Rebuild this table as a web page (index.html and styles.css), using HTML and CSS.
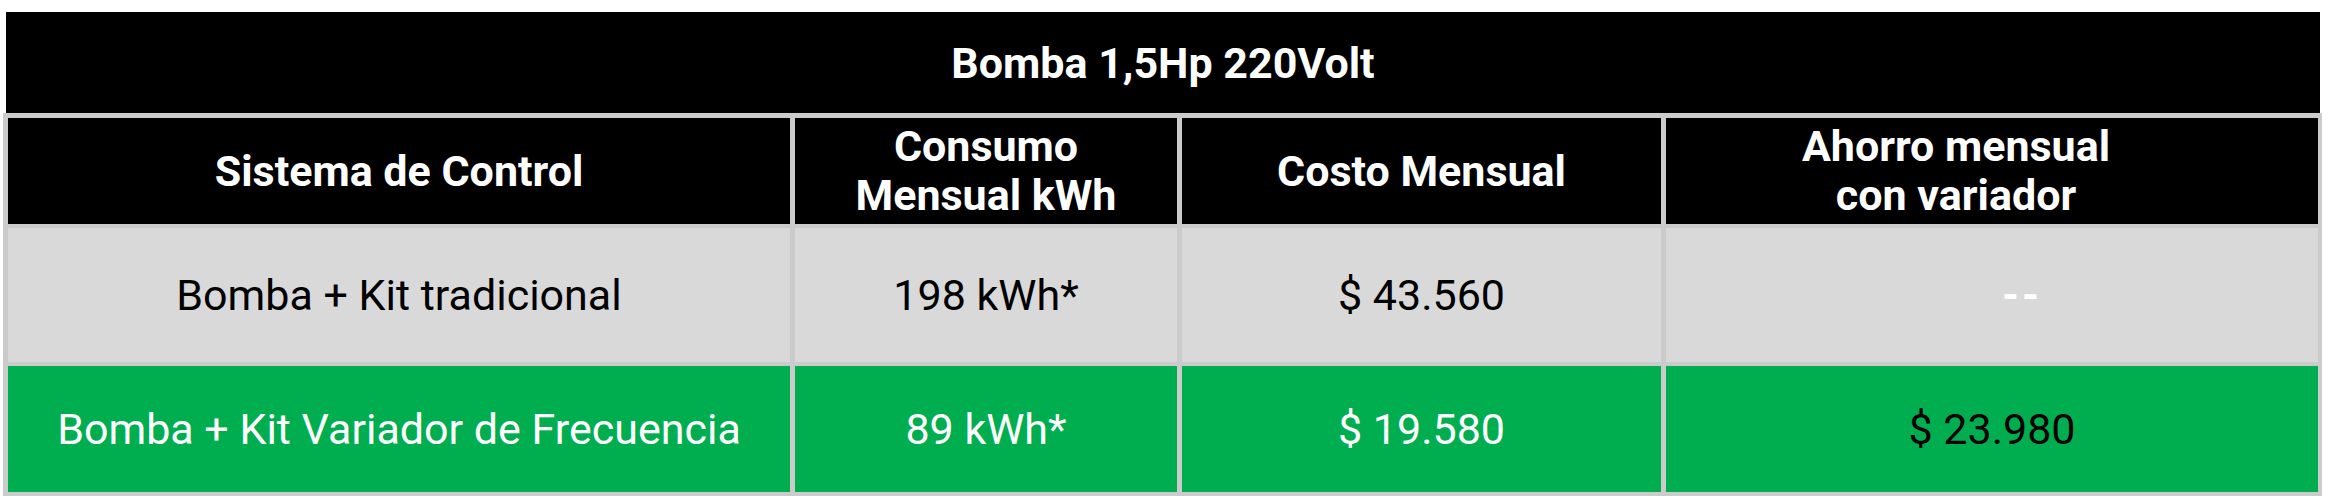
FILE: index.html
```html
<!DOCTYPE html>
<html lang="es">
<head>
<meta charset="utf-8">
<title>Bomba 1,5Hp 220Volt</title>
<link rel="stylesheet" href="styles.css">
</head>
<body>
<div class="sheet">
  <div class="title">Bomba 1,5Hp 220Volt</div>
  <div class="frame">
    <div class="grid">
      <div class="cell head">Sistema de Control</div>
      <div class="cell head">Consumo<br>Mensual kWh</div>
      <div class="cell head">Costo Mensual</div>
      <div class="cell head head-last">Ahorro mensual<br>con variador</div>

      <div class="cell gray">Bomba + Kit tradicional</div>
      <div class="cell gray">198 kWh*</div>
      <div class="cell gray">$ 43.560</div>
      <div class="cell gray empty">--</div>

      <div class="cell green">Bomba + Kit Variador de Frecuencia</div>
      <div class="cell green">89 kWh*</div>
      <div class="cell green">$ 19.580</div>
      <div class="cell green dark">$ 23.980</div>
    </div>
  </div>
</div>
</body>
</html>
```
FILE: styles.css
```css
html, body {
  margin: 0;
  padding: 0;
  background: #ffffff;
}

body {
  font-family: Roboto, "Liberation Sans", Arial, sans-serif;
}

.sheet {
  padding-top: 12px;
  width: 2334px;
}

.title {
  margin-left: 6px;
  width: 2314px;
  height: 101px;
  background: #000000;
  color: #ffffff;
  font-weight: 700;
  font-size: 43px;
  display: flex;
  align-items: center;
  justify-content: center;
}

.frame {
  margin-left: 3px;
  width: 2319px;
  box-sizing: border-box;
  padding: 5px 4px 4px 5px;
  background: #cbcbcb;
}

.grid {
  display: grid;
  grid-template-columns: 782px 382px 479px 652px;
  grid-template-rows: 106px 134px 126px;
  column-gap: 5px;
  row-gap: 4px;
}

.cell {
  display: flex;
  align-items: center;
  justify-content: center;
  text-align: center;
  font-size: 43px;
  line-height: 48px;
}

.head {
  background: #000000;
  color: #ffffff;
  font-weight: 700;
  font-size: 43px;
  line-height: 49px;
}

.head-last {
  padding-right: 72px;
}

.gray {
  background: #d9d9d9;
  color: #000000;
}

.empty {
  color: #ffffff;
  font-weight: 700;
  letter-spacing: 3px;
  padding-left: 60px;
}

.green {
  background: #00ae4f;
  color: #ffffff;
}

.green.dark {
  color: #000000;
}
```
